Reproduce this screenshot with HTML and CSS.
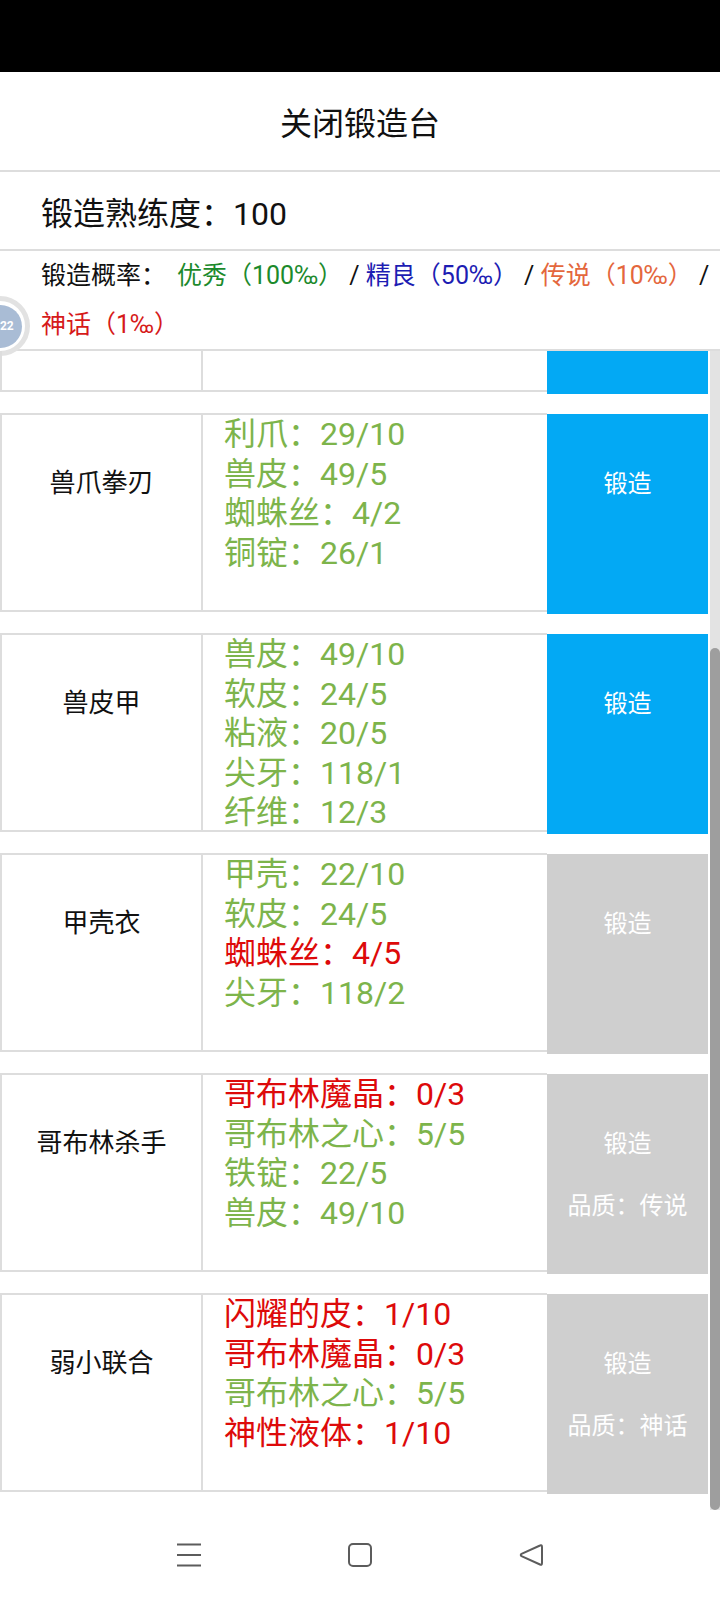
FILE: index.html
```html
<!DOCTYPE html>
<html lang="zh-CN">
<head>
  <meta charset="UTF-8" />
  <meta name="viewport" content="width=device-width, initial-scale=1" />
  <title>锻造台</title>
  <link rel="stylesheet" href="styles.css">
</head>
<body>
  <div class="status-bar"></div>

  <div class="close-btn">关闭锻造台</div>

  <div class="skill">锻造熟练度：100</div>

  <div class="rates">
    <span class="rates-label">锻造概率：</span><span class="r-good">优秀（100‰）</span> / <span class="r-fine">精良（50‰）</span> / <span class="r-epic">传说（10‰）</span> / <span class="r-myth">神话（1‰）</span>
  </div>

  <div class="float-ball">
    <div class="ball-core">2222</div>
  </div>

  <div class="list-wrap">
    <div class="recipe-list">

      <!-- scrolled past: only its lower edge shows -->
      <div class="recipe">
        <div class="recipe-table">
          <div class="recipe-name"></div>
          <div class="recipe-mats"></div>
        </div>
        <div class="forge-btn"></div>
      </div>

      <div class="recipe">
        <div class="recipe-table">
          <div class="recipe-name">兽爪拳刃</div>
          <div class="recipe-mats">
            <div class="mat ok">利爪：29/10</div>
            <div class="mat ok">兽皮：49/5</div>
            <div class="mat ok">蜘蛛丝：4/2</div>
            <div class="mat ok">铜锭：26/1</div>
          </div>
        </div>
        <div class="forge-btn">锻造</div>
      </div>

      <div class="recipe">
        <div class="recipe-table">
          <div class="recipe-name">兽皮甲</div>
          <div class="recipe-mats">
            <div class="mat ok">兽皮：49/10</div>
            <div class="mat ok">软皮：24/5</div>
            <div class="mat ok">粘液：20/5</div>
            <div class="mat ok">尖牙：118/1</div>
            <div class="mat ok">纤维：12/3</div>
          </div>
        </div>
        <div class="forge-btn">锻造</div>
      </div>

      <div class="recipe">
        <div class="recipe-table">
          <div class="recipe-name">甲壳衣</div>
          <div class="recipe-mats">
            <div class="mat ok">甲壳：22/10</div>
            <div class="mat ok">软皮：24/5</div>
            <div class="mat lack">蜘蛛丝：4/5</div>
            <div class="mat ok">尖牙：118/2</div>
          </div>
        </div>
        <div class="forge-btn disabled">锻造</div>
      </div>

      <div class="recipe">
        <div class="recipe-table">
          <div class="recipe-name">哥布林杀手</div>
          <div class="recipe-mats">
            <div class="mat lack">哥布林魔晶：0/3</div>
            <div class="mat ok">哥布林之心：5/5</div>
            <div class="mat ok">铁锭：22/5</div>
            <div class="mat ok">兽皮：49/10</div>
          </div>
        </div>
        <div class="forge-btn disabled">
          <span>锻造</span>
          <span>品质：传说</span>
        </div>
      </div>

      <div class="recipe">
        <div class="recipe-table">
          <div class="recipe-name">弱小联合</div>
          <div class="recipe-mats">
            <div class="mat lack">闪耀的皮：1/10</div>
            <div class="mat lack">哥布林魔晶：0/3</div>
            <div class="mat ok">哥布林之心：5/5</div>
            <div class="mat lack">神性液体：1/10</div>
          </div>
        </div>
        <div class="forge-btn disabled">
          <span>锻造</span>
          <span>品质：神话</span>
        </div>
      </div>

    </div>
    <div class="scroll-track"><div class="scroll-thumb"></div></div>
  </div>

  <div class="nav-bar">
    <svg class="nav-icon" width="26" height="24" viewBox="0 0 26 24">
      <path d="M1 1.5H25M1 12H25M1 22.5H25" stroke="#5c5c5c" stroke-width="2" fill="none"/>
    </svg>
    <svg class="nav-icon" width="26" height="24" viewBox="0 0 26 24">
      <rect x="2" y="1" width="22" height="22" rx="4" stroke="#5c5c5c" stroke-width="2" fill="none"/>
    </svg>
    <svg class="nav-icon" width="26" height="24" viewBox="0 0 26 24">
      <path d="M22 2.5Q24 1.5 24 4V20Q24 22.5 22 21.5L3.5 13.2Q2 12 3.5 10.8Z" stroke="#5c5c5c" stroke-width="2" fill="none" stroke-linejoin="round"/>
    </svg>
  </div>
</body>
</html>
```

FILE: styles.css
```css
body {
  margin: 0;
  font-family: Roboto, "Noto Sans CJK SC", sans-serif;
  color: #111;
  background: #fff;
  position: relative;
  height: 1600px;
  overflow: hidden;
}

.status-bar {
  height: 72px;
  background: #000;
}

.close-btn {
  height: 98px;
  display: flex;
  align-items: center;
  justify-content: center;
  font-size: 32px;
  border-bottom: 2px solid #ddd;
}

.skill {
  height: 77px;
  display: flex;
  align-items: center;
  padding-left: 41px;
  font-size: 32px;
  border-bottom: 2px solid #ddd;
}

.rates {
  padding: 0 8px 0 41px;
  font-size: 25px;
  line-height: 49px;
  border-bottom: 2px solid #ddd;
}

.rates-label {
  margin-right: 11px;
}

.r-good { color: #1c8a2c; }
.r-fine { color: #1d1db3; }
.r-epic { color: #e4673d; }
.r-myth { color: #d61a1a; }

/* floating helper ball, half off screen */
.float-ball {
  position: absolute;
  left: -30px;
  top: 296px;
  width: 50px;
  height: 50px;
  border: 5px solid #e2e2e2;
  border-radius: 50%;
  background: #fff;
  display: flex;
  align-items: center;
  justify-content: center;
}

.ball-core {
  width: 43px;
  height: 43px;
  border-radius: 50%;
  background: #a9bcd5;
  color: #fff;
  font-size: 12px;
  font-weight: bold;
  display: flex;
  align-items: center;
  justify-content: center;
}

.list-wrap {
  position: relative;
  height: 1159px;
}

/* list is scrolled to the bottom: overflow spills off the top */
.recipe-list {
  height: 100%;
  box-sizing: border-box;
  padding-bottom: 17px;
  overflow: hidden;
  display: flex;
  flex-direction: column;
  justify-content: flex-end;
  gap: 20px;
}

.recipe {
  flex-shrink: 0;
  display: flex;
  width: 708px;
  height: 200px;
}

.recipe-table {
  display: flex;
  width: 547px;
  height: 199px;
  box-sizing: border-box;
  border: 2px solid #ddd;
  border-right: 0;
}

.recipe-name {
  width: 201px;
  flex-shrink: 0;
  box-sizing: border-box;
  border-right: 2px solid #ddd;
  text-align: center;
  font-size: 26px;
  line-height: 30px;
  padding-top: 53px;
}

.recipe-mats {
  padding-left: 21px;
  font-size: 32px;
  line-height: 39.6px;
}

.mat.ok { color: #7db44b; }
.mat.lack { color: #dd0a0a; }

.forge-btn {
  width: 161px;
  height: 200px;
  margin-top: 1px;
  box-sizing: border-box;
  padding-top: 55px;
  display: flex;
  flex-direction: column;
  align-items: center;
  gap: 32px;
  font-size: 24px;
  line-height: 30px;
  color: #fff;
  background: #03a9f4;
}

.forge-btn.disabled {
  background: #cfcfcf;
}

.scroll-track {
  position: absolute;
  top: 0;
  right: 0;
  bottom: 0;
  width: 10px;
  background: #e3e3e3;
}

.scroll-thumb {
  position: absolute;
  top: 297px;
  left: 0;
  right: 0;
  bottom: 0;
  border-radius: 5px;
  background: #9e9e9e;
}

.nav-bar {
  height: 90px;
  display: flex;
  align-items: center;
  justify-content: center;
  gap: 145px;
}
```
